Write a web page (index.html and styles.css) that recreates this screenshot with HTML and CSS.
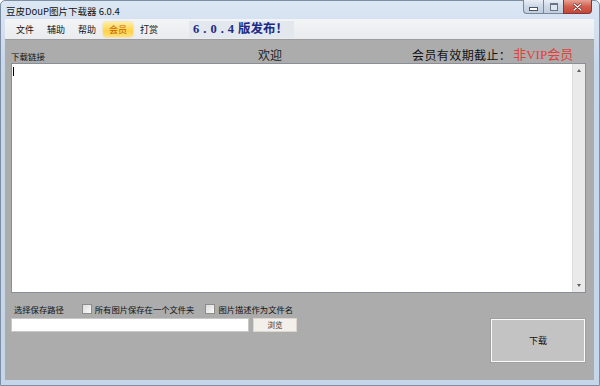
FILE: index.html
```html
<!DOCTYPE html>
<html>
<head>
    <title>豆皮DouP图片下载器 6.0.4</title>
    <meta charset="UTF-8">
    <link rel="stylesheet" href="styles.css">
</head>
<body>
    <div class="window">
        <div class="titlebar">
            <span class="title">豆皮DouP图片下载器 6.0.4</span>
            <div class="win-buttons">
                <span class="wbtn wbtn-min"><i></i></span>
                <span class="wbtn wbtn-max"><i></i></span>
                <span class="wbtn wbtn-close">
                    <svg width="9" height="8" viewBox="0 0 9 8">
                        <path d="M1 1 L8 7 M8 1 L1 7" stroke="#5a2020" stroke-width="2.6" stroke-linecap="round"/>
                        <path d="M1 1 L8 7 M8 1 L1 7" stroke="#fff" stroke-width="1.4" stroke-linecap="round"/>
                    </svg>
                </span>
            </div>
        </div>
        <div class="menubar">
            <span class="menu-item">文件</span>
            <span class="menu-item">辅助</span>
            <span class="menu-item">帮助</span>
            <span class="menu-item active">会员</span>
            <span class="menu-item">打赏</span>
            <span class="notice"><span class="notice-num">6.0.4</span>版发布！</span>
        </div>
        <div class="client">
            <div class="info-row">
                <span class="lbl-link">下载链接</span>
                <span class="lbl-welcome">欢迎</span>
                <span class="lbl-expire">会员有效期截止：</span>
                <span class="lbl-vip">非VIP会员</span>
            </div>
            <div class="link-box">
                <div class="link-text"><span class="caret"></span></div>
                <div class="scrollbar">
                    <span class="arrow arrow-up"></span>
                    <span class="arrow arrow-down"></span>
                </div>
            </div>
            <div class="bottom">
                <div class="path-col">
                    <div class="option-row">
                        <span class="lbl-path">选择保存路径</span>
                        <label class="option option-first"><span class="check"></span>所有图片保存在一个文件夹</label>
                        <label class="option"><span class="check"></span>图片描述作为文件名</label>
                    </div>
                    <div class="path-row">
                        <div class="path-input"></div>
                        <div class="browse">浏览</div>
                    </div>
                </div>
                <div class="download">下载</div>
            </div>
        </div>
    </div>
</body>
</html>
```

FILE: styles.css
```css
body {
    margin: 0;
    font-family: "Noto Sans CJK SC", "Noto Sans", sans-serif;
    color: #111;
}
.window {
    width: 600px;
    height: 386px;
    box-sizing: border-box;
    display: flex;
    flex-direction: column;
    padding: 0 5px 5px 4px;
    border: 1px solid #7d8ea3;
    border-radius: 5px 5px 0 0;
    background: linear-gradient(#dce7f4, #c8d8eb 60px, #c6d6ea);
}
.titlebar {
    height: 18px;
    display: flex;
    align-items: center;
    margin-right: -5px;
}
.title {
    font-size: 9.5px;
    padding-left: 1px;
    padding-top: 2px;
}
.win-buttons {
    margin-left: auto;
    margin-right: 7px;
    align-self: flex-start;
    display: flex;
    margin-top: -1px;
}
.wbtn {
    height: 14px;
    box-sizing: border-box;
    border: 1px solid #7b8798;
    border-top: none;
    display: flex;
    align-items: center;
    justify-content: center;
    background: linear-gradient(#e9eef5, #cdd8e6 50%, #c0cede);
}
.wbtn-min {
    width: 20px;
    border-radius: 0 0 0 4px;
    border-right: none;
}
.wbtn-min i {
    width: 7px;
    height: 2px;
    margin-top: 4px;
    background: #fff;
    border: 1px solid #4a5566;
}
.wbtn-max {
    width: 20px;
    border-right: none;
}
.wbtn-max i {
    width: 6px;
    height: 5px;
    border: 1px solid #6a7484;
    border-top-width: 2px;
    background: #dfe6ef;
}
.wbtn-close {
    width: 29px;
    border-radius: 0 0 4px 0;
    border-color: #7a3a3a;
    background: linear-gradient(#e8a294, #d0604f 50%, #c84534);
}
.menubar {
    height: 20px;
    display: flex;
    align-items: center;
    padding-left: 5px;
    background: linear-gradient(#f3f4f6, #e9ebee);
    font-size: 9px;
}
.menu-item {
    padding: 0 6px;
    height: 15px;
    line-height: 15px;
    margin-right: 1px;
}
.menu-item.active {
    color: #c06000;
    border-radius: 4px;
    background: linear-gradient(#ffeea4, #ffd24a 60%, #ffe07a);
    box-shadow: 0 0 2px #f5c84a;
}
.notice {
    margin-left: 24px;
    padding: 0 6px 0 4px;
    height: 17px;
    line-height: 17px;
    font-family: "Liberation Serif", "Noto Sans CJK SC", serif;
    font-weight: bold;
    font-size: 12.5px;
    color: #1c2a86;
    background: #e3e7ee;
}
.notice-num {
    letter-spacing: 4px;
}
.client {
    flex: 1;
    background: #acacac;
    padding: 7px 8px 0 6px;
    display: flex;
    flex-direction: column;
    border-top: 1px solid #9c9c9c;
}
.info-row {
    height: 16px;
    display: flex;
    align-items: flex-end;
}
.lbl-link {
    font-size: 8.5px;
    line-height: 12px;
    margin-bottom: 1px;
}
.lbl-welcome {
    margin-left: 213px;
    font-size: 12px;
    line-height: 16px;
    color: #222;
}
.lbl-expire {
    margin-left: 130px;
    font-size: 12px;
    line-height: 16px;
    letter-spacing: 0.4px;
}
.lbl-vip {
    margin-left: 2px;
    font-size: 13px;
    line-height: 16px;
    color: #e0403c;
    font-family: "Liberation Serif", "Noto Sans CJK SC", serif;
}
.link-box {
    height: 230px;
    box-sizing: border-box;
    display: flex;
    background: #fff;
    border: 1px solid #8a8e96;
}
.link-text {
    flex: 1;
    padding: 3px 1px;
}
.caret {
    display: block;
    width: 1px;
    height: 9px;
    background: #000;
}
.scrollbar {
    width: 12px;
    background: #eaeaea;
    border-left: 1px solid #dcdcdc;
    display: flex;
    flex-direction: column;
    justify-content: space-between;
    align-items: center;
    padding: 5px 0;
}
.arrow {
    width: 0;
    height: 0;
    border-left: 2.5px solid transparent;
    border-right: 2.5px solid transparent;
}
.arrow-up {
    border-bottom: 3px solid #606060;
}
.arrow-down {
    border-top: 3px solid #606060;
}
.bottom {
    display: flex;
    margin-top: 10px;
}
.path-col {
    display: flex;
    flex-direction: column;
    gap: 3px;
}
.option-row {
    height: 12px;
    display: flex;
    align-items: center;
    font-size: 8.3px;
    padding-left: 3px;
}
.option {
    display: flex;
    align-items: center;
    margin-left: 11px;
}
.option-first {
    margin-left: 18px;
}
.check {
    width: 8px;
    height: 8px;
    margin-right: 3px;
    border: 1px solid #8c8c8c;
    background: linear-gradient(135deg, #dcdcdc, #fafafa);
}
.path-row {
    display: flex;
    gap: 4px;
}
.path-input {
    width: 238px;
    height: 14px;
    box-sizing: border-box;
    background: #fff;
    border: 1px solid #c8c8c8;
}
.browse {
    width: 44px;
    height: 14px;
    box-sizing: border-box;
    background: #f3efea;
    border: 1px solid #ddd6cf;
    font-size: 7.5px;
    line-height: 12px;
    text-align: center;
    color: #333;
}
.download {
    margin-left: auto;
    margin-top: 16px;
    margin-right: 1px;
    width: 94px;
    height: 43px;
    box-sizing: border-box;
    border: 1px solid #fafafa;
    box-shadow: 0 0 0 1px #a0a0a0;
    background: #c3c3c3;
    font-size: 9px;
    display: flex;
    align-items: center;
    justify-content: center;
}
```
